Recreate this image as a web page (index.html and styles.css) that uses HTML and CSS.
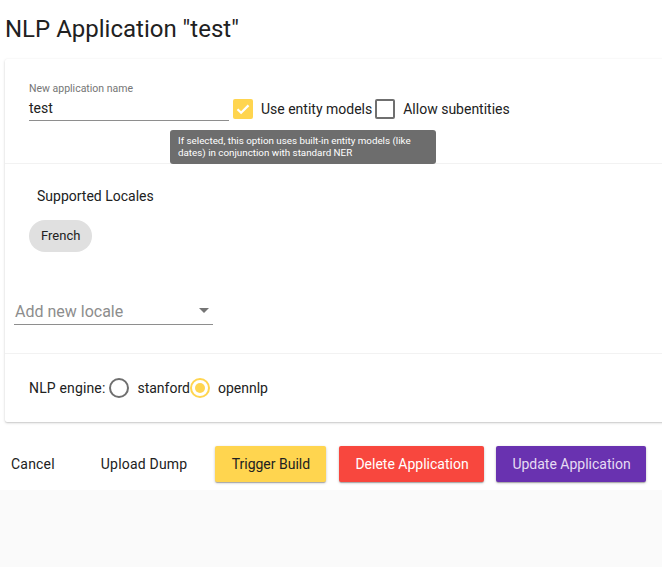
FILE: index.html
```html
<!DOCTYPE html>
<html>
<head>
<meta charset="utf-8">
<link rel="stylesheet" href="styles.css">
</head>
<body>
<div class="page">
  <h1 class="title">NLP Application "test"</h1>
  <div class="card">
    <div class="section s1">
      <div class="field">
        <label class="field-label">New application name</label>
        <div class="field-input">test</div>
      </div>
      <span class="check checked">
        <svg width="20" height="20" viewBox="0 0 20 20"><path d="M4.5 10.2l3.6 3.6 7.4-7.4" fill="none" stroke="#fff" stroke-width="2.2"/></svg>
      </span>
      <span class="opt-label">Use entity models</span>
      <span class="check"></span>
      <span class="opt-label">Allow subentities</span>
      <div class="tooltip">If selected, this option uses built-in entity models (like dates) in conjunction with standard NER</div>
    </div>
    <div class="section s2">
      <div class="locales-title">Supported Locales</div>
      <div class="chips"><span class="chip">French</span></div>
      <div class="select">
        <span class="placeholder">Add new locale</span>
        <span class="arrow"></span>
      </div>
    </div>
    <div class="section s3">
      <span class="engine-label">NLP engine:</span>
      <span class="radio"></span>
      <span class="radio-label">stanford</span>
      <span class="radio selected"><span class="dot"></span></span>
      <span class="radio-label">opennlp</span>
    </div>
  </div>
  <div class="actions">
    <button class="btn text cancel">Cancel</button>
    <button class="btn text upload">Upload Dump</button>
    <button class="btn raised yellow">Trigger Build</button>
    <button class="btn raised red">Delete Application</button>
    <button class="btn raised purple">Update Application</button>
  </div>
</div>
</body>
</html>
```
FILE: styles.css
```css
html, body {
  margin: 0;
  padding: 0;
  background: #fafafa;
  overflow: hidden;
  font-family: Roboto, "Liberation Sans", sans-serif;
  color: #212121;
}
.page {
  background: #fff;
  height: 490px;
  box-shadow: 0 1px 2px rgba(0,0,0,0.4), 0 2px 3px rgba(0,0,0,0.12);
  padding-left: 5px;
  box-sizing: border-box;
}
.title {
  margin: 0;
  padding-top: 15px;
  height: 59px;
  box-sizing: border-box;
  font-size: 24px;
  line-height: 28px;
  font-weight: 400;
  color: #212121;
}
.card {
  margin-right: -30px;
  background: #fff;
  border-radius: 2px;
  box-shadow: 0 1px 3px rgba(0,0,0,0.16), 0 1px 1px rgba(0,0,0,0.08), 0 0 1px rgba(0,0,0,0.06);
  position: relative;
}
.section {
  border-top: 1px solid #f2f2f2;
  box-sizing: border-box;
}
.section:first-child { border-top: none; }
.s1 {
  height: 104px;
  display: flex;
  align-items: flex-start;
  padding: 23px 0 0 24px;
  position: relative;
}
.field { width: 200px; }
.field-label {
  display: block;
  font-size: 10.5px;
  line-height: 13px;
  color: #757575;
}
.field-input {
  font-size: 14px;
  line-height: 20px;
  padding: 3px 0 2px;
  border-bottom: 1px solid #8e8e8e;
  color: #212121;
}
.check {
  width: 20px;
  height: 20px;
  box-sizing: border-box;
  border: 2px solid #6f6f6f;
  border-radius: 2px;
  margin-top: 17px;
  display: flex;
  align-items: center;
  justify-content: center;
}
.check.checked {
  margin-left: 4px;
  background: #ffd54f;
  border: none;
}
.check svg { display: block; }
.opt-label {
  font-size: 14px;
  line-height: 20px;
  margin-top: 17px;
  margin-left: 8px;
  margin-right: 3px;
}
.tooltip {
  position: absolute;
  left: 165px;
  top: 71px;
  width: 266px;
  box-sizing: border-box;
  padding: 5px 8px 5px;
  height: 34px;
  background: #6d6d6d;
  color: #fff;
  font-size: 9.8px;
  line-height: 11.5px;
  border-radius: 3px;
  z-index: 2;
}
.s2 {
  height: 190px;
  padding-top: 22px;
}
.locales-title {
  font-size: 14px;
  line-height: 20px;
  padding-left: 32px;
}
.chips {
  padding: 14px 0 0 24px;
}
.chip {
  display: inline-block;
  height: 32px;
  line-height: 32px;
  padding: 0 12px;
  border-radius: 16px;
  background: #e0e0e0;
  font-size: 13px;
  color: #212121;
}
.select {
  margin: 47px 0 0 9px;
  width: 199px;
  height: 26px;
  border-bottom: 1px solid #8e8e8e;
  display: flex;
  align-items: center;
  justify-content: space-between;
  box-sizing: border-box;
  padding: 0 4px 1px 1px;
}
.placeholder {
  font-size: 16px;
  color: #8d8d8d;
}
.arrow {
  width: 0;
  height: 0;
  border-left: 5px solid transparent;
  border-right: 5px solid transparent;
  border-top: 5px solid #757575;
  margin-top: -2px;
}
.s3 {
  height: 69px;
  display: flex;
  align-items: center;
  padding-left: 24px;
  padding-bottom: 1px;
}
.engine-label, .radio-label {
  font-size: 14px;
}
.engine-label { margin-right: 4px; letter-spacing: 0.15px; }
.radio {
  width: 20px;
  height: 20px;
  box-sizing: border-box;
  border: 2px solid #6f6f6f;
  border-radius: 50%;
  display: flex;
  align-items: center;
  justify-content: center;
}
.radio.selected { border-color: #ffd54f; }
.dot {
  width: 10px;
  height: 10px;
  border-radius: 50%;
  background: #ffd54f;
}
.radio-label { margin-left: 8px; margin-right: 0; }
.actions {
  display: flex;
  align-items: center;
  margin-top: 24px;
  margin-left: -5px;
}
.btn {
  height: 36px;
  border: none;
  border-radius: 2px;
  font-family: Roboto, "Liberation Sans", sans-serif;
  font-size: 14px;
  padding: 0 16px;
  background: transparent;
  color: #212121;
  white-space: nowrap;
  flex: none;
}
.btn.text { padding: 0 11px; letter-spacing: 0.2px; }
.btn.upload { margin-left: 24px; }
.btn.yellow { margin-left: 17px; width: 111px; background: #ffd54f; color: #212121; }
.btn.red { margin-left: 13px; width: 145px; background: #f8473e; color: #fff; }
.btn.purple { margin-left: 12px; width: 150px; background: #6932b0; color: #e6dcf3; }
.btn.raised {
  box-shadow: 0 1px 3px rgba(0,0,0,0.2), 0 1px 1px rgba(0,0,0,0.14), 0 2px 1px -1px rgba(0,0,0,0.12);
}
```
